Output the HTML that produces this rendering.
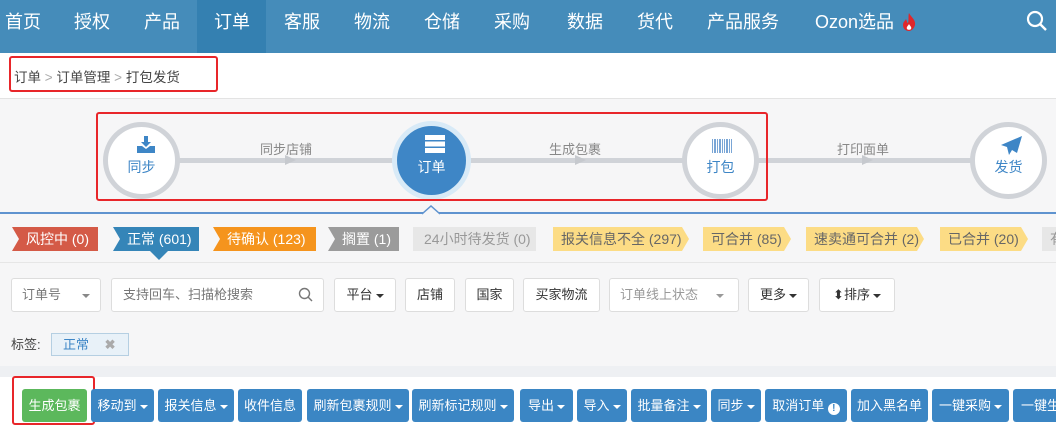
<!DOCTYPE html>
<html><head><meta charset="utf-8"><style>
*{box-sizing:border-box;margin:0;padding:0}
body{width:1056px;height:427px;overflow:hidden;background:#f6f6f7;font-family:"Liberation Sans","Noto Sans CJK SC",sans-serif;position:relative;font-size:13px;color:#555}
.a{position:absolute}
.nav{left:0;top:0;width:1056px;height:53px;background:#458cba}
.nav span{position:absolute;top:0;height:53px;line-height:44px;color:#fff;font-size:18px}
.bc{left:0;top:53px;width:1056px;height:46px;background:#fff;border-bottom:1px solid #e3e3e3}
.red{border:2px solid #e8262a;border-radius:3px}
.c{width:77px;height:77px;border-radius:50%;border:5px solid #d0d3d8;background:#fff;text-align:center;color:#3e86c6;font-size:14px}
.c b{display:block;position:absolute;width:100%;top:30px;font-weight:normal}
.line{height:5px;background:#d0d3d8;top:158px}
.lbl{top:139px;color:#888;font-size:13px}
.tri{top:155px;width:0;height:0;border-left:11px solid #c6c9ce;border-top:5px solid transparent;border-bottom:5px solid transparent}
.tag{top:227px;height:24px;line-height:24px;font-size:14px;padding-left:14px;color:#fff}
.box{top:278px;height:34px;background:#fff;border:1px solid #ddd;border-radius:3px;line-height:32px;font-size:13px;color:#333;text-align:center}
.btn{top:389px;height:33px;background:#3b86c4;color:#fff;border-radius:3px;line-height:33px;font-size:13px;text-align:center}
.car{display:inline-block;width:0;height:0;border-left:4px solid transparent;border-right:4px solid transparent;border-top:4px solid currentColor;vertical-align:middle;margin-left:3px}
</style></head><body>
<div class="a nav">
<div class="a" style="left:197px;top:0;width:69px;height:53px;background:#3480b1"></div>
<span style="left:5px">首页</span><span style="left:74px">授权</span><span style="left:144px">产品</span><span style="left:214px">订单</span><span style="left:284px">客服</span><span style="left:354px">物流</span><span style="left:424px">仓储</span><span style="left:494px">采购</span><span style="left:567px">数据</span><span style="left:637px">货代</span><span style="left:707px">产品服务</span><span style="left:815px">Ozon选品</span>
<svg class="a" style="left:900px;top:12px" width="18" height="20" viewBox="0 0 18 20"><path d="M9 1C11 5 16 8 15 13C14 17 11 19 9 19C6 19 3 17 3 13C3 10 5 9 6 7C7 9 7 11 8 11C9 8 8 4 9 1Z" fill="#e0262a"/><path d="M9 12C10 14 12 15 11 17C10 18 8 18 7 17C6 15 8 14 9 12Z" fill="#fff"/></svg>
<svg class="a" style="left:1026px;top:10px" width="22" height="22" viewBox="0 0 22 22"><circle cx="9" cy="9" r="7" fill="none" stroke="#fff" stroke-width="2.2"/><path d="M14 14L20 20" stroke="#fff" stroke-width="2.4"/></svg>
</div>
<div class="a bc"><div class="a" style="left:14px;top:13px;font-size:13.5px;color:#444">订单 <span style="color:#aaa">&gt;</span> 订单管理 <span style="color:#aaa">&gt;</span> 打包发货</div></div>
<div class="a red" style="left:9px;top:56px;width:209px;height:36px"></div>

<div class="a line" style="left:175px;width:830px"></div>
<div class="a lbl" style="left:260px">同步店铺</div><div class="a lbl" style="left:549px">生成包裹</div><div class="a lbl" style="left:837px">打印面单</div>
<div class="a tri" style="left:285px"></div><div class="a tri" style="left:575px"></div><div class="a tri" style="left:862px"></div>
<div class="a c" style="left:103px;top:122px"><svg class="a" style="left:29px;top:9px" width="18" height="17" viewBox="0 0 18 17"><path d="M7 0H11V6H14L9 11L4 6H7Z" fill="#3e86c6"/><path d="M0 10H5L9 13L13 10H18V17H0Z" fill="#3e86c6"/></svg><b>同步</b></div>
<div class="a c" style="left:392px;top:121px;width:79px;height:79px;background:#3e86c6;border-color:#d8eaf7;color:#fff"><svg class="a" style="left:28px;top:9px" width="20" height="18" viewBox="0 0 20 18"><rect y="0" width="20" height="5" fill="#fff"/><rect y="6.5" width="20" height="5" fill="#fff"/><rect y="13" width="20" height="5" fill="#fff"/></svg><b style="top:31px">订单</b></div>
<div class="a c" style="left:682px;top:122px"><svg class="a" style="left:25px;top:12px" width="20" height="14" viewBox="0 0 20 14"><g fill="#7aa6d6"><rect x="0" width="1" height="14"/><rect x="2" width="2" height="14"/><rect x="5" width="1" height="14"/><rect x="7" width="2" height="14"/><rect x="10" width="1" height="14"/><rect x="12" width="1" height="14"/><rect x="14" width="2" height="14"/><rect x="17" width="1" height="14"/><rect x="19" width="1" height="14"/></g></svg><b>打包</b></div>
<div class="a c" style="left:970px;top:122px"><svg class="a" style="left:26px;top:9px" width="22" height="20" viewBox="0 0 22 20"><path d="M21 0L0 9L6 11L8 19L11 14L16 17Z" fill="#3e86c6"/></svg><b>发货</b></div>
<div class="a red" style="left:96px;top:112px;width:672px;height:89px"></div>

<div class="a" style="left:0;top:212px;width:1056px;height:2px;background:#5f93cf"></div>
<svg class="a" style="left:422px;top:205px" width="18" height="10"><path d="M0 9L9 1L18 9" fill="#f6f6f7" stroke="#5f93cf" stroke-width="1.5"/></svg>

<div class="a tag" style="left:12px;width:86px;background:#d45a47;clip-path:polygon(0 0,100% 0,100% 100%,0 100%,7px 50%)">风控中 (0)</div>
<div class="a tag" style="left:113px;width:86px;background:#3585b8;clip-path:polygon(0 0,100% 0,100% 100%,0 100%,7px 50%)">正常 (601)</div>
<div class="a" style="left:150px;top:251px;width:0;height:0;border-left:9px solid transparent;border-right:9px solid transparent;border-top:9px solid #3585b8"></div>
<div class="a tag" style="left:213px;width:103px;background:#f5941d;clip-path:polygon(0 0,100% 0,100% 100%,0 100%,7px 50%)">待确认 (123)</div>
<div class="a tag" style="left:328px;width:71px;background:#9b9b9b;clip-path:polygon(0 0,100% 0,100% 100%,0 100%,7px 50%)">搁置 (1)</div>
<div class="a tag" style="left:413px;width:123px;background:#e7e7e7;color:#999;padding-left:11px">24小时待发货 (0)</div>
<div class="a tag" style="left:553px;width:136px;background:#fcdc85;color:#666;padding-left:8px;clip-path:polygon(0 0,129px 0,136px 50%,129px 100%,0 100%)">报关信息不全 (297)</div>
<div class="a tag" style="left:703px;width:88px;background:#fcdc85;color:#666;padding-left:8px;clip-path:polygon(0 0,81px 0,88px 50%,81px 100%,0 100%)">可合并 (85)</div>
<div class="a tag" style="left:806px;width:118px;background:#fcdc85;color:#666;padding-left:8px;clip-path:polygon(0 0,111px 0,118px 50%,111px 100%,0 100%)">速卖通可合并 (2)</div>
<div class="a tag" style="left:940px;width:88px;background:#fcdc85;color:#666;padding-left:8px;clip-path:polygon(0 0,81px 0,88px 50%,81px 100%,0 100%)">已合并 (20)</div>
<div class="a tag" style="left:1042px;width:20px;background:#e7e7e7;color:#999;padding-left:8px">有</div>

<div class="a" style="left:0;top:262px;width:1056px;height:1px;background:#e6e6e6"></div>
<div class="a box" style="left:11px;width:90px;text-align:left;padding-left:10px;color:#777">订单号<span class="car" style="position:absolute;right:10px;top:15px;color:#888"></span></div>
<div class="a box" style="left:111px;width:213px;text-align:left;padding-left:11px;color:#777">支持回车、扫描枪搜索<svg class="a" style="right:10px;top:8px" width="15" height="15"><circle cx="6.5" cy="6.5" r="5" fill="none" stroke="#777" stroke-width="1.4"/><path d="M10 10L14 14" stroke="#777" stroke-width="1.4"/></svg></div>
<div class="a box" style="left:334px;width:62px">平台<span class="car"></span></div>
<div class="a box" style="left:405px;width:50px">店铺</div>
<div class="a box" style="left:465px;width:49px">国家</div>
<div class="a box" style="left:523px;width:77px">买家物流</div>
<div class="a box" style="left:609px;width:130px;text-align:left;padding-left:10px;color:#999">订单线上状态<span class="car" style="position:absolute;right:14px;top:15px;color:#999"></span></div>
<div class="a box" style="left:748px;width:61px">更多<span class="car"></span></div>
<div class="a box" style="left:819px;width:76px">⬍排序<span class="car"></span></div>

<div class="a" style="left:11px;top:334px;font-size:13px;color:#444">标签:</div>
<div class="a" style="left:51px;top:333px;width:78px;height:23px;background:#e8f1f8;border:1px solid #b5cfe2;line-height:21px;padding-left:11px;color:#3e86c6">正常 <span style="color:#aaa;margin-left:12px;font-weight:bold">✖</span></div>

<div class="a" style="left:0;top:366px;width:1056px;height:11px;background:#eef0f3"></div>
<div class="a" style="left:0;top:377px;width:1056px;height:50px;background:#fff"></div>
<div class="a btn" style="left:22px;width:65px;background:#5cb85c">生成包裹</div>
<div class="a red" style="left:12px;top:376px;width:83px;height:49px"></div>
<div class="a btn" style="left:91px;width:63px">移动到<span class="car"></span></div>
<div class="a btn" style="left:158px;width:76px">报关信息<span class="car"></span></div>
<div class="a btn" style="left:238px;width:64px">收件信息</div>
<div class="a btn" style="left:307px;width:102px">刷新包裹规则<span class="car"></span></div>
<div class="a btn" style="left:412px;width:102px">刷新标记规则<span class="car"></span></div>
<div class="a btn" style="left:520px;width:53px">导出<span class="car"></span></div>
<div class="a btn" style="left:577px;width:50px">导入<span class="car"></span></div>
<div class="a btn" style="left:631px;width:76px">批量备注<span class="car"></span></div>
<div class="a btn" style="left:711px;width:50px">同步<span class="car"></span></div>
<div class="a btn" style="left:765px;width:82px">取消订单 <span style="display:inline-block;width:12px;height:12px;border-radius:50%;background:#fff;color:#3b86c4;font-size:10px;line-height:12px;font-weight:bold;vertical-align:-1px">!</span></div>
<div class="a btn" style="left:851px;width:77px">加入黑名单</div>
<div class="a btn" style="left:932px;width:77px">一键采购<span class="car"></span></div>
<div class="a btn" style="left:1013px;width:60px;text-align:left;padding-left:8px">一键生</div>
</body></html>
